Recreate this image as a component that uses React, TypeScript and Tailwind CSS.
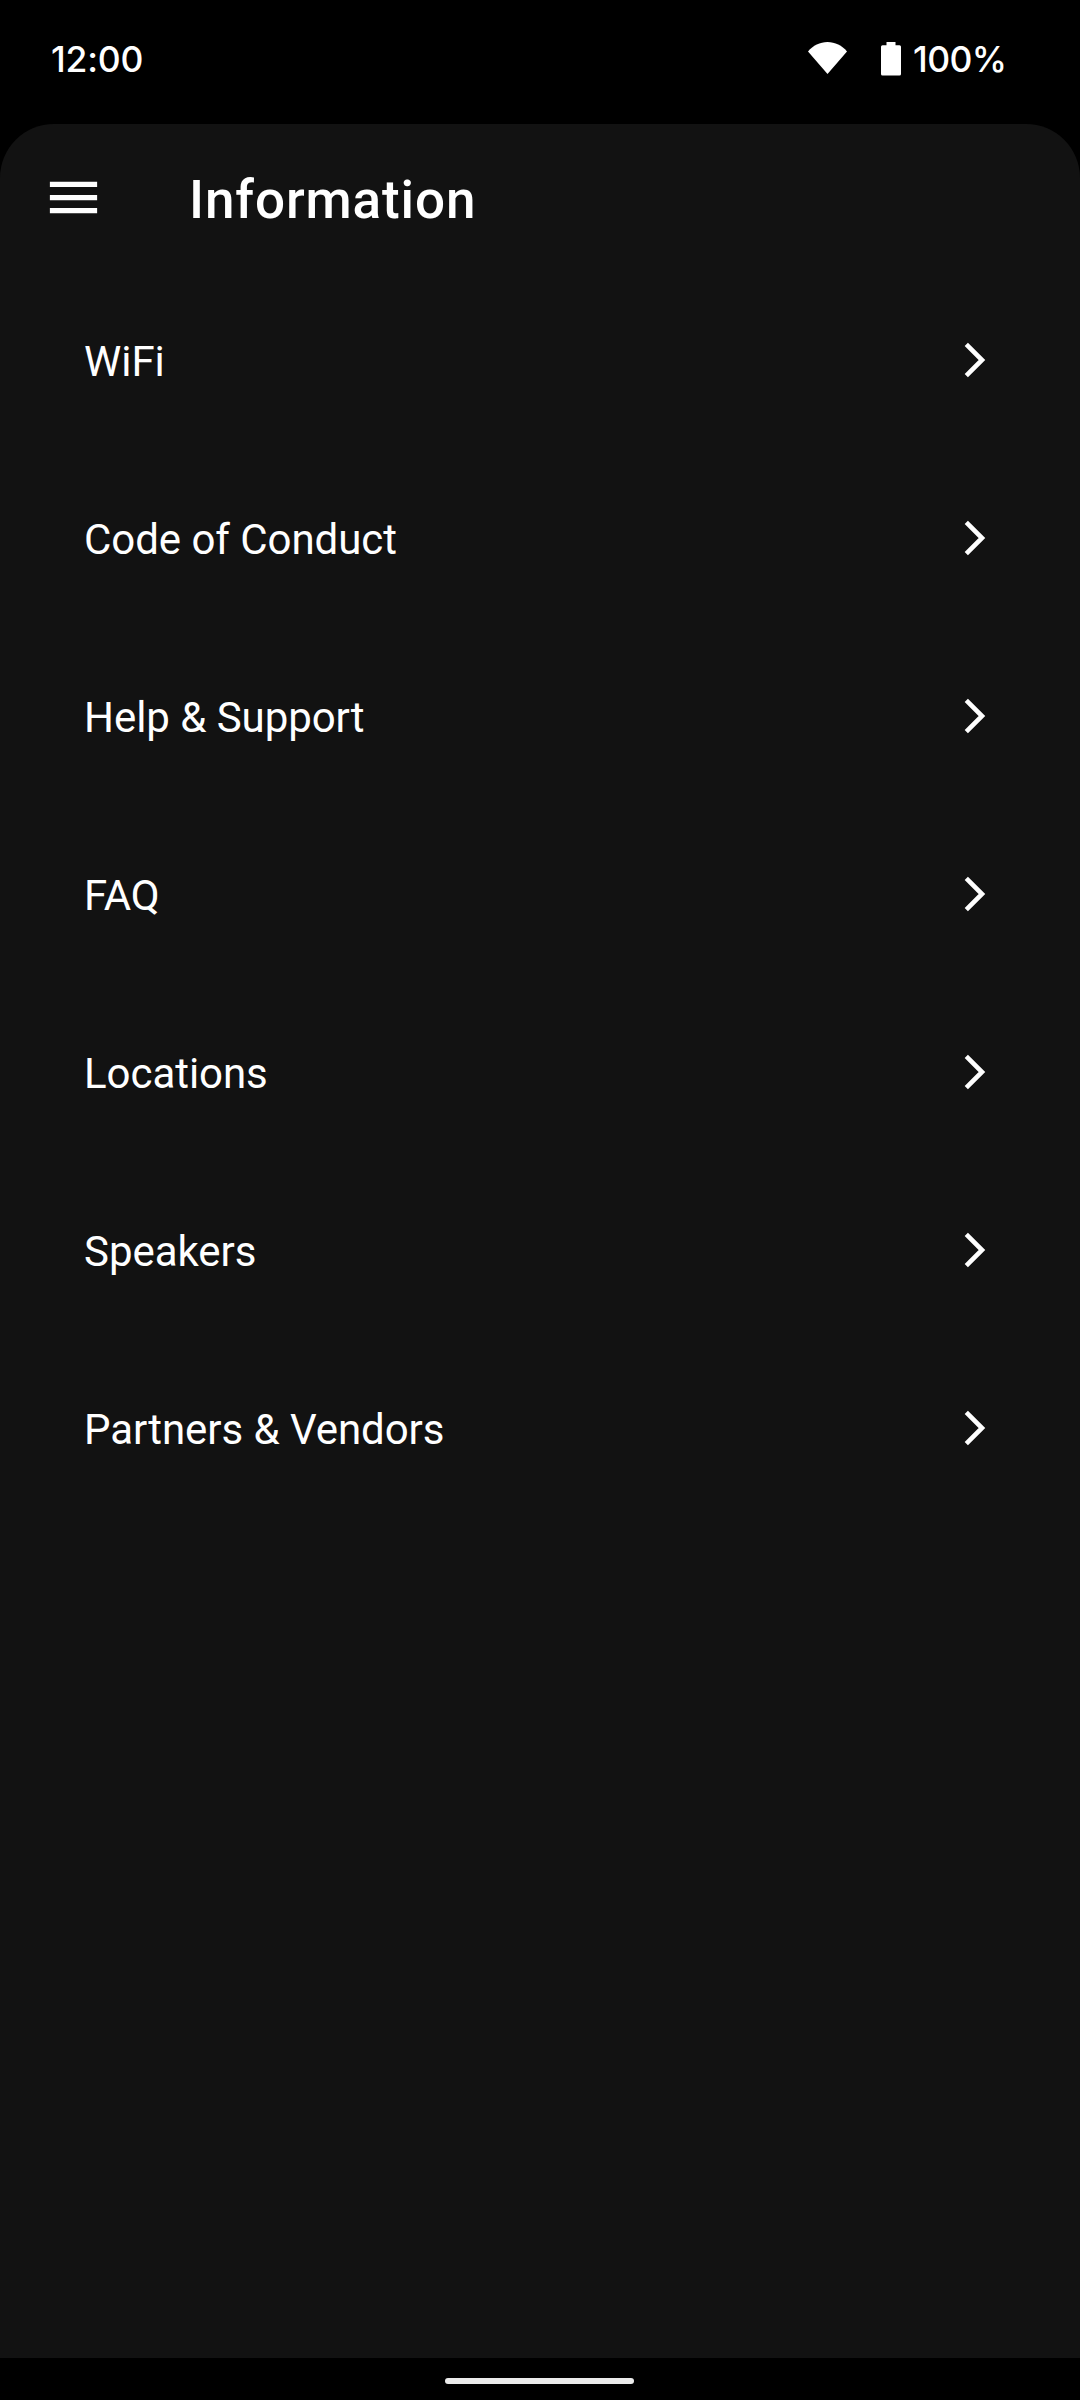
interface MenuItem {
  id: string
  label: string
}

const ITEMS: MenuItem[] = [
  { id: 'wifi', label: 'WiFi' },
  { id: 'conduct', label: 'Code of Conduct' },
  { id: 'help', label: 'Help & Support' },
  { id: 'faq', label: 'FAQ' },
  { id: 'locations', label: 'Locations' },
  { id: 'speakers', label: 'Speakers' },
  { id: 'partners', label: 'Partners & Vendors' },
]

function StatusBar() {
  return (
    <div className="flex h-[124px] items-start justify-between pt-[35px] pl-[51px] font-['Inter',sans-serif] text-[35.5px] leading-[50px] font-medium">
      <span className="tracking-[-0.2px]">12:00</span>
      <div className="flex">
        <svg className="mt-[7px] mr-[34px] h-8 w-[39px]" viewBox="0 0 39 32" fill="currentColor">
          <path d="M0 9.5C5 3.5 12 0 19.5 0S34 3.5 39 9.5L19.5 32Z" />
        </svg>
        <svg className="mt-[7px] mr-3 h-[34px] w-5" viewBox="0 0 20 34" fill="currentColor">
          <path d="M5.5 0h9v3.2h4A1.5 1.5 0 0 1 20 4.7v27.4a1.5 1.5 0 0 1-1.5 1.5h-17A1.5 1.5 0 0 1 0 32.1V4.7a1.5 1.5 0 0 1 1.5-1.5h4Z" />
        </svg>
        <span className="w-[167px] tracking-[-0.6px]">100%</span>
      </div>
    </div>
  )
}

function Header({ title }: { title: string }) {
  return (
    <header className="flex h-[147px] items-center pl-[42px]">
      <button type="button" aria-label="Menu">
        <svg className="h-[63px] w-[63px]" viewBox="0 0 24 24" fill="currentColor">
          <path d="M3 18h18v-2H3v2zm0-5h18v-2H3v2zm0-7v2h18V6H3z" />
        </svg>
      </button>
      <h1 className="mt-[7px] ml-[84px] text-[53px] font-medium tracking-[0.9px]">{title}</h1>
    </header>
  )
}

function Row({ label }: MenuItem) {
  return (
    <li className="flex h-[178px] items-center justify-between pr-[94px] pl-[84px]">
      <span className="pt-[2px] text-[42px] tracking-[-0.05px]">{label}</span>
      <svg className="h-[36px] w-[22px]" viewBox="0 0 22 36" fill="none">
        <path d="M2.3 2.3L18 18L2.3 33.7" stroke="currentColor" strokeWidth="4.6" />
      </svg>
    </li>
  )
}

export default function App() {
  return (
    <div className="flex h-[2400px] w-[1080px] flex-col bg-black font-['Roboto',sans-serif] text-white">
      <StatusBar />
      <main className="flex-1 rounded-t-[54px] bg-[#121212]">
        <Header title="Information" />
        <ul>
          {ITEMS.map(item => (
            <Row key={item.id} {...item} />
          ))}
        </ul>
      </main>
      <div className="flex h-[42px] justify-center pt-5 pr-px">
        <div className="h-[6px] w-[189px] rounded-full bg-[#ebebeb]" />
      </div>
    </div>
  )
}
